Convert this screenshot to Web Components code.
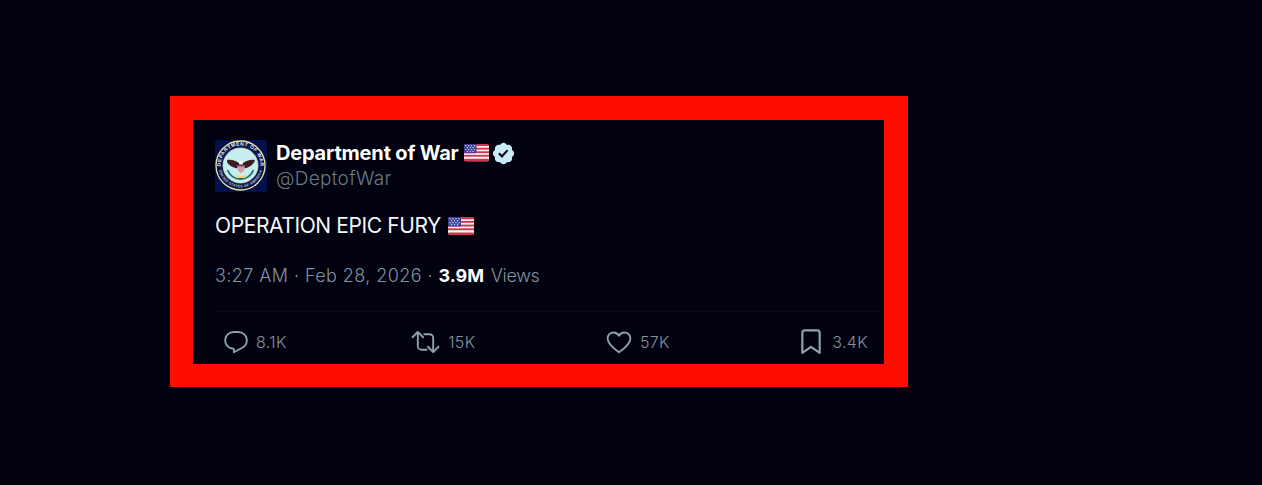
<!DOCTYPE html>
<html lang="en"><head><meta charset="utf-8"><title>Tweet</title>
<style>
html,body{margin:0;height:100%;background:#01010f}
body{font-family:Inter,"Liberation Sans",sans-serif;overflow:hidden}
</style></head><body>
<template id="flag-t"><style>:host{display:inline-flex;flex:none}svg{display:block;border-radius:2px;width:var(--fw,25px);height:auto}</style>
<svg viewBox="0 0 26 18" aria-hidden="true">
<rect width="26" height="18" rx="2" fill="#f4f4fa"/>
<g fill="#d8324a"><rect width="26" height="2.2" rx="1"/><rect y="3.9" width="26" height="1.9"/><rect y="7.6" width="26" height="1.9"/><rect y="11.3" width="26" height="1.9"/><rect y="15.4" width="26" height="2.6" rx="1"/></g>
<rect width="13" height="9.5" rx="1" fill="#3a3f94"/>
<g fill="#e8e8f8"><circle cx="2" cy="1.8" r=".7"/><circle cx="5" cy="1.8" r=".7"/><circle cx="8" cy="1.8" r=".7"/><circle cx="11" cy="1.8" r=".7"/><circle cx="3.5" cy="3.8" r=".7"/><circle cx="6.5" cy="3.8" r=".7"/><circle cx="9.5" cy="3.8" r=".7"/><circle cx="2" cy="5.8" r=".7"/><circle cx="5" cy="5.8" r=".7"/><circle cx="8" cy="5.8" r=".7"/><circle cx="11" cy="5.8" r=".7"/><circle cx="3.5" cy="7.8" r=".7"/><circle cx="6.5" cy="7.8" r=".7"/><circle cx="9.5" cy="7.8" r=".7"/></g>
</svg></template>

<template id="seal-t"><style>:host{display:block;flex:none;width:52px;height:52px}svg{display:block}</style>
<svg viewBox="0 0 52 52" width="52" height="52" aria-hidden="true">
<rect width="52" height="52" rx="3" fill="#04104a"/>
<circle cx="25.500" cy="25.500" r="24.500" fill="#0a1030" stroke="#e9e3b4" stroke-width="1.300"/>
<circle cx="25.500" cy="25.500" r="22.500" fill="#0b1a52"/>
<defs><path id="top" d="M5.500 25.500a20 20 0 0 1 40 0"/><path id="bot" d="M3.500 25.500a22 22 0 0 0 44 0"/></defs>
<text font-family="Liberation Sans" font-size="5" font-weight="700" fill="#e6ecf2" letter-spacing=".5"><textPath href="#top" startOffset="50%" text-anchor="middle">DEPARTMENT OF WAR</textPath></text>
<text font-family="Liberation Sans" font-size="3.600" font-weight="700" fill="#b9c2cc" letter-spacing=".3"><textPath href="#bot" startOffset="50%" text-anchor="middle">UNITED STATES OF AMERICA</textPath></text>
<circle cx="25.500" cy="25.500" r="17.500" fill="#c6eef0" stroke="#e6e0b8" stroke-width=".7"/>
<path d="M12 20c4.500-.8 10 1 14 4.500 4-3.500 9.500-5.300 14-4.500-1.300 4.500-6 8-11 8.500l-2 2h-2l-2-2c-5-.5-11.700-4-11-8.500z" fill="#3a1d1c"/>
<path d="M23.500 21.500c.7-1.300 4.300-1.300 5 0l-.8 3h-3.400z" fill="#f2efe6"/>
<path d="M22.500 25h7v4.500c0 1.700-1.700 2.800-3.500 3.800-1.800-1-3.500-2.100-3.500-3.800z" fill="#ece6e0"/>
<path d="M22.500 25h7v1.500h-7z" fill="#3a478f"/>
<path d="M24 26.500v5M26 26.500v6.300M28 26.500v5" stroke="#c73b45" stroke-width=".9"/>
<path d="M12.500 30c2.500 6 7.500 9 13 9s10.500-3 13-9" fill="none" stroke="#1c6f68" stroke-width="1.800"/>
<path d="M20 34.500c3 1.500 9 1.500 12 0l-2 3.500h-8z" fill="#e7d98c"/>
</svg></template>

<template id="badge-t"><style>:host{display:inline-flex;flex:none}svg{display:block}</style>
<svg viewBox="0 0 22 22" width="25" height="25" aria-hidden="true"><path fill="#cbeaf7" d="M20.396 11c-.018-.646-.215-1.275-.57-1.816-.354-.54-.852-.972-1.438-1.246.223-.607.27-1.264.14-1.897-.131-.634-.437-1.218-.882-1.687-.47-.445-1.053-.75-1.687-.882-.633-.13-1.29-.083-1.897.14-.273-.587-.704-1.086-1.245-1.44S11.647 1.62 11 1.604c-.646.017-1.273.213-1.813.568s-.969.854-1.24 1.44c-.608-.223-1.267-.272-1.902-.14-.635.13-1.22.436-1.69.882-.445.47-.749 1.055-.878 1.688-.13.633-.08 1.29.144 1.896-.587.274-1.087.705-1.443 1.245-.356.54-.555 1.17-.574 1.817.02.647.218 1.276.574 1.817.356.54.856.972 1.443 1.245-.224.606-.274 1.263-.144 1.896.13.634.433 1.218.877 1.688.47.443 1.054.747 1.687.878.633.132 1.29.084 1.897-.136.274.586.705 1.084 1.246 1.439.54.354 1.17.551 1.816.569.647-.016 1.276-.213 1.817-.567s.972-.854 1.245-1.44c.604.239 1.266.296 1.903.164.636-.132 1.22-.447 1.68-.907.46-.46.776-1.044.908-1.681s.075-1.299-.165-1.903c.586-.274 1.084-.705 1.439-1.246.354-.54.551-1.17.569-1.816z"/><path fill="#0a0a1e" d="M9.662 14.850l-3.429-3.428 1.293-1.302 2.072 2.072 4.400-4.794 1.347 1.246z"/></svg></template>

<template id="stat-t"><style>
:host{display:inline-flex;align-items:center;gap:var(--g,7px);color:#83949f;font-size:16px;letter-spacing:.35px;line-height:24px;font-weight:300}
::slotted(svg){display:block;flex:none}
</style><slot name="icon"></slot><span><slot></slot></span></template>

<template id="card-t"><style>
:host{display:block;width:738px;height:291px;box-sizing:border-box;border:solid #fe0d00;border-width:24px 24px 23px 23px;background:#01010f;color:#f4f7f9}
.wrap{height:100%;box-sizing:border-box;padding:20px 0 0 22px;display:flex;flex-direction:column}
.head{display:flex;gap:9px;align-items:flex-start;height:52px}
.who{display:flex;flex-direction:column}
.name{display:flex;align-items:center;gap:5px;height:26px;font-size:20px;font-weight:700;letter-spacing:-.18px;color:#fff;white-space:nowrap}
.name dow-badge{margin-left:-3px}
.handle{font-size:19px;font-weight:300;color:#6a7a86;line-height:26px;letter-spacing:.3px}
.text{margin-top:20px;height:28px;display:flex;align-items:center;gap:7px;font-size:21px;font-weight:400;letter-spacing:-.4px;white-space:nowrap;--fw:26px}
.meta{margin-top:22px;height:28px;display:flex;align-items:center;font-size:18px;font-weight:300;color:#849622;color:#82949f;letter-spacing:.42px;white-space:pre}
.meta b{font-weight:700;color:#fff;letter-spacing:0}
.meta span{letter-spacing:-.3px;margin-left:2px}
.bar{margin-top:22px;border-top:1px solid #090914;height:53px;box-sizing:border-box;display:flex;padding:7px 16px 0 8px;justify-content:space-between;align-items:center}
</style>
<div class="wrap">
<div class="head"><dow-seal></dow-seal><div class="who"><div class="name">Department of War <dow-flag></dow-flag><dow-badge></dow-badge></div><div class="handle">@DeptofWar</div></div></div>
<div class="text">OPERATION EPIC FURY <dow-flag></dow-flag></div>
<div class="meta">3:27 AM · Feb 28, 2026 · <b>3.9M</b><span> Views</span></div>
<div class="bar"><slot></slot></div>
</div></template>

<template id="page-t"><style>:host{display:block;padding:96px 0 0 170px}</style><slot></slot></template>

<dow-page><dow-card>
<dow-stat><svg slot="icon" width="26" height="26" viewBox="0 0 24 24" fill="none" stroke="#8fa3ae" stroke-width="1.700" stroke-linejoin="round"><path d="M2 10.500C2 6 5.600 2.800 10 2.800h4.200c4.400 0 7.800 3.400 7.800 7.700 0 3-1.700 5.300-4.200 6.800L10 21.500v-3.300C5.500 18.300 2 15 2 10.500z"/></svg>8.1K</dow-stat>
<dow-stat style="margin-left:-6px;--g:8px"><svg slot="icon" width="29" height="26" viewBox="0 0 24 22" fill="none" stroke="#8fa3ae" stroke-width="1.600" stroke-linejoin="round" stroke-linecap="round"><path d="M1 7l4.500-4.500L10 7M5.500 3v11.500a3 3 0 0 0 3 3h4.500M23 15l-4.500 4.500L14 15M18.500 19V7.500a3 3 0 0 0-3-3H11"/></svg>15K</dow-stat>
<dow-stat style="--g:8px"><svg slot="icon" width="26" height="26" viewBox="0 0 24 24" fill="none" stroke="#8fa3ae" stroke-width="1.700" stroke-linejoin="round"><path d="M12 21.500C7 18 1.500 13.800 1.500 8.800 1.500 5.500 4 3.200 7 3.200c2.100 0 3.900 1 5 3 1.100-2 2.900-3 5-3 3 0 5.500 2.300 5.500 5.600 0 5-5.500 9.200-10.500 12.700z"/></svg>57K</dow-stat>
<dow-stat style="--g:10px"><svg slot="icon" width="22" height="26" viewBox="0 0 20 24" fill="none" stroke="#8fa3ae" stroke-width="2" stroke-linejoin="round"><path d="M2 3.500C2 2.100 3 1.200 4.300 1.200h11.400c1.300 0 2.300.9 2.300 2.300V22L10 16.500 2 22z"/></svg>3.4K</dow-stat>
</dow-card></dow-page>
<script>
const def=(tag,id)=>customElements.define(tag,class extends HTMLElement{constructor(){super();this.attachShadow({mode:"open"}).appendChild(document.getElementById(id).content.cloneNode(true))}});
def("dow-flag","flag-t");def("dow-seal","seal-t");def("dow-badge","badge-t");def("dow-stat","stat-t");def("dow-card","card-t");def("dow-page","page-t");
</script>
</body></html>
